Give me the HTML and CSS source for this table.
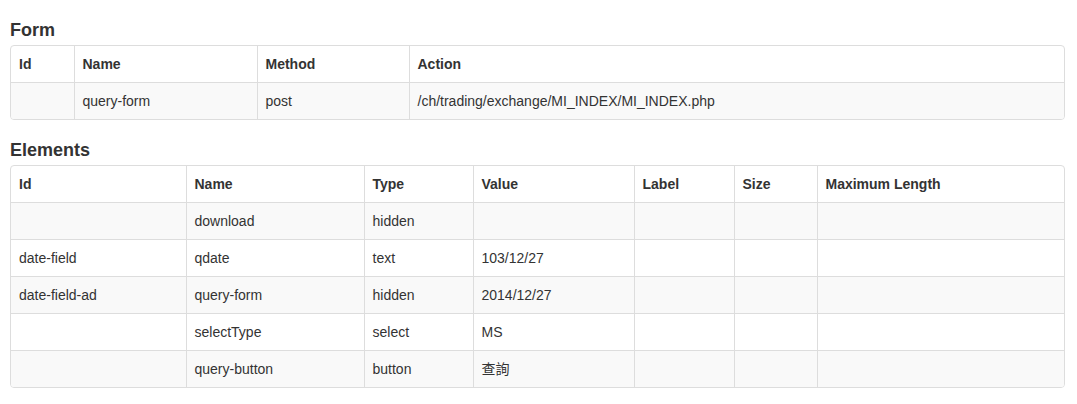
FILE: index.html
```html
<!DOCTYPE html>
<html>
<head>
<meta charset="utf-8">
<link rel="stylesheet" href="styles.css">
</head>
<body>
<div class="page">
  <section class="section">
    <h4 class="title">Form</h4>
    <div class="panel">
      <table class="grid">
        <colgroup>
          <col class="w-f1"><col class="w-f2"><col class="w-f3"><col>
        </colgroup>
        <thead>
          <tr><th>Id</th><th>Name</th><th>Method</th><th>Action</th></tr>
        </thead>
        <tbody>
          <tr><td></td><td>query-form</td><td>post</td><td>/ch/trading/exchange/MI_INDEX/MI_INDEX.php</td></tr>
        </tbody>
      </table>
    </div>
  </section>
  <section class="section">
    <h4 class="title">Elements</h4>
    <div class="panel">
      <table class="grid">
        <colgroup>
          <col class="w-e1"><col class="w-e2"><col class="w-e3"><col class="w-e4"><col class="w-e5"><col class="w-e6"><col>
        </colgroup>
        <thead>
          <tr><th>Id</th><th>Name</th><th>Type</th><th>Value</th><th>Label</th><th>Size</th><th>Maximum Length</th></tr>
        </thead>
        <tbody>
          <tr><td></td><td>download</td><td>hidden</td><td></td><td></td><td></td><td></td></tr>
          <tr><td>date-field</td><td>qdate</td><td>text</td><td>103/12/27</td><td></td><td></td><td></td></tr>
          <tr><td>date-field-ad</td><td>query-form</td><td>hidden</td><td>2014/12/27</td><td></td><td></td><td></td></tr>
          <tr><td></td><td>selectType</td><td>select</td><td>MS</td><td></td><td></td><td></td></tr>
          <tr><td></td><td>query-button</td><td>button</td><td>查詢</td><td></td><td></td><td></td></tr>
        </tbody>
      </table>
    </div>
  </section>
</div>
</body>
</html>
```

FILE: styles.css
```css
html, body {
  margin: 0;
  padding: 0;
  background: #fff;
}
body {
  font-family: "Liberation Sans", Arial, "Noto Sans CJK TC", sans-serif;
  font-size: 14px;
  line-height: 20px;
  color: #333;
}
.page {
  padding: 20px 12px 0 10px;
  display: flex;
  flex-direction: column;
  gap: 20px;
}
.title {
  margin: 0 0 5px 0;
  font-size: 18px;
  line-height: 20px;
  font-weight: bold;
  color: #333;
}
.panel {
  border: 1px solid #ddd;
  border-radius: 4px;
  overflow: hidden;
  background: #fff;
}
.grid {
  width: 100%;
  border-collapse: collapse;
  table-layout: fixed;
}
.grid th, .grid td {
  padding: 8px;
  text-align: left;
  vertical-align: top;
  border: 1px solid #ddd;
  height: 20px;
  white-space: nowrap;
}
.grid th {
  font-weight: bold;
}
.grid tr > :first-child { border-left: 0; }
.grid tr > :last-child { border-right: 0; }
.grid thead tr:first-child > * { border-top: 0; }
.grid tbody tr:last-child > * { border-bottom: 0; }
.grid tbody tr:nth-child(odd) { background: #f9f9f9; }

.w-f1 { width: 63px; }
.w-f2 { width: 183px; }
.w-f3 { width: 152px; }

.w-e1 { width: 175px; }
.w-e2 { width: 178px; }
.w-e3 { width: 109px; }
.w-e4 { width: 161px; }
.w-e5 { width: 100px; }
.w-e6 { width: 83px; }
```
